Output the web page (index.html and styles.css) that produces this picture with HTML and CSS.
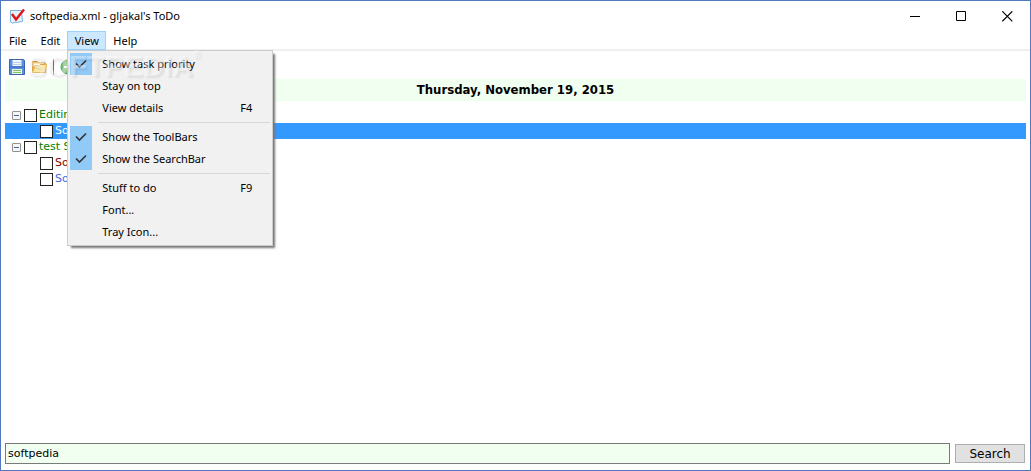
FILE: index.html
```
<!DOCTYPE html>
<html lang="en">
<head>
<meta charset="utf-8">
<title>softpedia.xml - gljakal's ToDo</title>
<link rel="stylesheet" href="styles.css">
</head>
<body>
<div class="window">
  <header class="titlebar">
    <svg class="app-icon" width="16" height="16" viewBox="0 0 16 16" aria-hidden="true">
      <path d="M1.5 2.5h11l1 11-10 1.5-2-1z" fill="#e4f1fc" stroke="#7fb2e0"/>
      <path d="M3 6l4 5.500 8-10" fill="none" stroke="#e01515" stroke-width="2.400"/>
    </svg>
    <h1 class="title">softpedia.xml - gljakal's ToDo</h1>
    <div class="controls">
      <button class="control" aria-label="Minimize"><svg width="11" height="11" viewBox="0 0 11 11"><path d="M0 5.500h10" stroke="#000"/></svg></button>
      <button class="control" aria-label="Maximize"><svg width="11" height="11" viewBox="0 0 11 11"><path d="M.5.5h9v9h-9z" fill="none" stroke="#000"/></svg></button>
      <button class="control" aria-label="Close"><svg width="11" height="11" viewBox="0 0 11 11"><path d="M.3.3l10 10M10.300.3l-10 10" stroke="#000" stroke-width="1.200"/></svg></button>
    </div>
  </header>

  <nav class="menubar">
    <button class="menu-title">File</button>
    <button class="menu-title">Edit</button>
    <div class="menu-anchor">
      <button class="menu-title open" aria-expanded="true">View</button>
      <div class="menu" role="menu">
        <button class="item" role="menuitemcheckbox" aria-checked="true"><span class="mark"><svg width="12" height="10" viewBox="0 0 12 10"><path d="M1 4.500l3.500 3.500L11 1.500" fill="none" stroke="#333" stroke-width="1.600"/></svg></span><span class="label">Show task priority</span></button>
        <button class="item" role="menuitem"><span class="mark-none"></span><span class="label">Stay on top</span></button>
        <button class="item" role="menuitem"><span class="mark-none"></span><span class="label">View details</span><span class="key">F4</span></button>
        <hr class="divider">
        <button class="item" role="menuitemcheckbox" aria-checked="true"><span class="mark"><svg width="12" height="10" viewBox="0 0 12 10"><path d="M1 4.500l3.500 3.500L11 1.500" fill="none" stroke="#333" stroke-width="1.600"/></svg></span><span class="label">Show the ToolBars</span></button>
        <button class="item" role="menuitemcheckbox" aria-checked="true"><span class="mark"><svg width="12" height="10" viewBox="0 0 12 10"><path d="M1 4.500l3.500 3.500L11 1.500" fill="none" stroke="#333" stroke-width="1.600"/></svg></span><span class="label">Show the SearchBar</span></button>
        <hr class="divider">
        <button class="item" role="menuitem"><span class="mark-none"></span><span class="label">Stuff to do</span><span class="key">F9</span></button>
        <button class="item" role="menuitem"><span class="mark-none"></span><span class="label">Font...</span></button>
        <button class="item" role="menuitem"><span class="mark-none"></span><span class="label">Tray Icon...</span></button>
      </div>
    </div>
    <button class="menu-title">Help</button>
  </nav>

  <div class="toolbar">
    <button class="tool" aria-label="Save"><svg width="16" height="16" viewBox="0 0 16 16">
      <path d="M.5.5h14l1 1v14H.5z" fill="#5c8fdc" stroke="#3a64b0"/>
      <path d="M3.500 1h9v6h-9z" fill="#f3f8ff"/><path d="M4 3.500h8M4 5.500h8" stroke="#b9d0f0"/>
      <path d="M1 8h14" stroke="#3a68b8"/>
      <path d="M3 10h10v5H3z" fill="#e9f5e0"/><path d="M4 11.500h8M4 13.500h8" stroke="#7cc465"/>
    </svg></button>
    <button class="tool" aria-label="Open"><svg width="16" height="16" viewBox="0 0 16 16">
      <path d="M1.500 13.500v-11h5l1 1.500h7v9.500z" fill="#f5cf72" stroke="#d9a140"/>
      <path d="M3 6h10V4.500H3z" fill="#fff"/>
      <path d="M1.500 13.500L4 6.500h4l1-1h6.500l-1 8z" fill="#fce7a0" stroke="#dfac50"/>
    </svg></button>
    <span class="tool-split"></span>
    <button class="tool" aria-label="Add task"><svg width="16" height="16" viewBox="0 0 16 16">
      <circle cx="8" cy="8" r="7" fill="#7cc27a" stroke="#4fa552"/>
      <path d="M8 4v8M4 8h8" stroke="#fff" stroke-width="2"/>
    </svg></button>
  </div>

  <main class="content">
    <h2 class="date">Thursday, November 19, 2015</h2>
    <div class="tree">
      <div class="row"><button class="expander" aria-label="Collapse"></button><label class="task green"><input class="tick" type="checkbox">Editing</label></div>
      <div class="row child selected"><label class="task"><input class="tick" type="checkbox">So</label></div>
      <div class="row"><button class="expander" aria-label="Collapse"></button><label class="task green"><input class="tick" type="checkbox">test S</label></div>
      <div class="row child"><label class="task red"><input class="tick" type="checkbox">So</label></div>
      <div class="row child"><label class="task blue"><input class="tick" type="checkbox">So</label></div>
    </div>
  </main>

  <form class="search">
    <input class="query" type="text" value="softpedia" aria-label="Search text">
    <button class="submit" type="button">Search</button>
  </form>
  <div class="watermark">SOFTPEDIA<span class="reg">®</span></div>
</div>
</body>
</html>
```
FILE: styles.css
```
* { box-sizing: border-box; }
body { margin: 0; background: #fff; color: #000; }
button { margin: 0; padding: 0; border: 0; background: none; color: inherit; font: inherit; }
h1, h2 { margin: 0; }
svg { display: block; }

.window {
  position: relative;
  display: flex;
  flex-direction: column;
  min-height: 100vh;
  border: 1px solid #5078be;
  font: 11px/16px "DejaVu Sans", Verdana, sans-serif;
}

.titlebar { display: flex; align-items: center; height: 30px; padding-left: 8px; }
.title { flex: 1; padding-left: 5px; font: 11px/16px "Noto Sans", "Segoe UI", sans-serif; }
.controls { display: flex; }
.control { display: flex; justify-content: center; align-items: center; width: 46px; height: 28px; }

.menubar {
  display: flex;
  height: 20px;
  padding-left: 1px;
  border-bottom: 2px solid #f0f0f0;
  font: 11px/18px "Noto Sans", "Segoe UI", sans-serif;
}
.menu-title { height: 19px; padding: 0 6px; border: 1px solid transparent; line-height: 17px; }
.menu-anchor { position: relative; }
.menu-title.open { width: 39px; padding: 0; border-color: #99d1ff; background: #cce8ff; }

.menu {
  position: absolute;
  z-index: 1;
  top: 19px;
  left: 0;
  width: 206px;
  padding: 2px;
  border: 1px solid #ccc;
  background: #f1f1f1;
  box-shadow: 3px 3px 2px -1px #777;
}
.item { display: flex; align-items: center; width: 100%; height: 22px; text-align: left; }
.mark, .mark-none { width: 22px; height: 22px; }
.mark { display: flex; align-items: center; justify-content: center; background: #91c9f7; }
.label { flex: 1; padding-left: 10px; white-space: nowrap; }
.key { width: 30px; }
.divider { height: 1px; margin: 3px 0 3px 28px; border: 0; background: #d7d7d7; }

.toolbar { display: flex; align-items: center; gap: 6px; height: 28px; padding: 4px 8px 0; }
.tool-split { width: 1px; height: 16px; background: #777; }

.content { flex: 1; padding: 0 4px; }
.date { background: #f0fff0; font: bold 13px/22px "DejaVu Sans Condensed", Tahoma, sans-serif; text-align: center; }
.tree { padding-top: 6px; }
.row { display: flex; align-items: center; height: 16px; padding-left: 7px; }
.row.child { padding-left: 35px; }
.selected { background: #3399ff; color: #fff; }
.expander {
  width: 9px;
  height: 9px;
  margin-right: 3px;
  border: 1px solid #919191;
  border-radius: 1px;
  background: linear-gradient(#4b63a7, #4b63a7) center / 5px 1px no-repeat #f6f6f6;
}
.task { display: flex; align-items: center; gap: 2px; }
.tick { appearance: none; width: 13px; height: 13px; margin: 0; border: 1px solid #222; background: #fff; }
.green { color: #008000; }
.red { color: #8b0000; }
.blue { color: #4169e1; }

.search { display: flex; align-items: center; gap: 5px; padding: 0 5px 6px 4px; }
.query {
  flex: 1;
  min-width: 0;
  height: 21px;
  padding: 0 2px;
  border: 1px solid #7a7a7a;
  background: #f0fff0;
  font: inherit;
}
.submit { width: 70px; height: 19px; border: 1px solid #adadad; background: #e1e1e1; font-size: 12px; }

.watermark {
  position: absolute;
  z-index: 2;
  top: 48px;
  left: 26px;
  color: rgba(255, 255, 255, 0.4);
  font: bold 29px/34px "Liberation Sans", Arial, sans-serif;
  text-shadow: 2px 2px 2px rgba(0, 0, 0, 0.08);
  pointer-events: none;
}
.reg { font-size: 10px; vertical-align: top; line-height: 12px; }
```
